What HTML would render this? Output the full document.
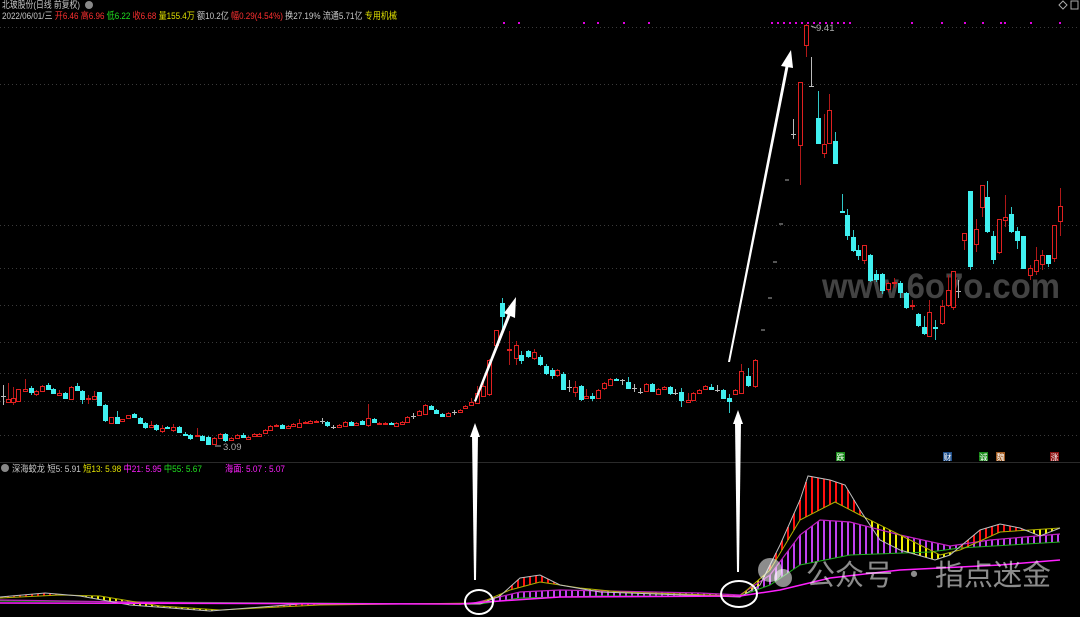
<!DOCTYPE html>
<html><head><meta charset="utf-8"><style>
html,body{margin:0;padding:0;background:#000;width:1080px;height:617px;overflow:hidden}
svg{position:absolute;left:0;top:0}
.t{font-family:"Liberation Sans","Noto Sans CJK SC",sans-serif;font-size:9.5px}
</style></head><body>
<svg id="s" width="1080" height="617" xmlns="http://www.w3.org/2000/svg">
<g id="grid" stroke="#3a3a3a" stroke-dasharray="1 3" stroke-width="1"></g>
<line x1="0" y1="462.5" x2="1080" y2="462.5" stroke="#2a2a2a"/>
<text x="822" y="298" font-family="Liberation Sans,sans-serif" font-size="35" font-weight="bold" fill="#5a5a5a" fill-opacity="0.75" textLength="238" lengthAdjust="spacingAndGlyphs">www.6o7o.com</text>
<g id="ind"></g>
<g id="cd"></g>
<g class="t">
<text x="2" y="8" fill="#c8c8c8" textLength="78" lengthAdjust="spacingAndGlyphs">北玻股份(日线 前复权)</text>
<circle cx="89" cy="5" r="4" fill="#888"/>
<text x="2" y="19" textLength="395" lengthAdjust="spacingAndGlyphs"><tspan fill="#c8c8c8">2022/06/01/三 </tspan><tspan fill="#ff3030">开6.46 高6.96 </tspan><tspan fill="#20e020">低6.22 </tspan><tspan fill="#ff3030">收6.68 </tspan><tspan fill="#e0e000">量155.4万 </tspan><tspan fill="#c8c8c8">额10.2亿 </tspan><tspan fill="#ff3030">幅0.29(4.54%) </tspan><tspan fill="#c8c8c8">换27.19% 流通5.71亿 </tspan><tspan fill="#e0e000">专用机械</tspan></text>
<circle cx="5" cy="468" r="4" fill="#888"/>
<text x="12" y="472" textLength="190" lengthAdjust="spacingAndGlyphs"><tspan fill="#c8c8c8">深海蛟龙 短5: 5.91 </tspan><tspan fill="#e0e000">短13: 5.98 </tspan><tspan fill="#ff20ff">中21: 5.95 </tspan><tspan fill="#20e020">中55: 5.67</tspan></text>
<text x="225" y="472" fill="#ff20ff" textLength="60" lengthAdjust="spacingAndGlyphs">海面: 5.07 : 5.07</text>
<text x="816" y="31" fill="#aaa">9.41</text>
<text x="223" y="450" fill="#aaa">3.09</text>
</g>
<g font-family="Liberation Sans,Noto Sans CJK SC,sans-serif" font-size="8" fill="#fff">
<rect x="836" y="452" width="9" height="9" fill="#1a8a1a"/><text x="836.5" y="460">跌</text>
<rect x="943" y="452" width="9" height="9" fill="#1e4e8a"/><text x="943.5" y="460">财</text>
<rect x="979" y="452" width="9" height="9" fill="#1a8a1a"/><text x="979.5" y="460">诚</text>
<rect x="996" y="452" width="9" height="9" fill="#a05a20"/><text x="996.5" y="460">魏</text>
<rect x="1050" y="452" width="9" height="9" fill="#8a1010"/><text x="1050.5" y="460">涨</text>
</g>
<path d="M1059 5 l4 -4 l4 4 l-4 4z" fill="none" stroke="#aaa"/>
<rect x="1071" y="1" width="7" height="8" fill="none" stroke="#aaa"/>
<g fill="#fff">
<polygon points="474,401 476,402 512,312 509,311"/><polygon points="504,313 516,297 515,318"/>
<polygon points="728,362 730,362 789,64 786,64"/><polygon points="781,66 791,50 793,68"/>
<polygon points="474,580 476,580 478,435 472,435"/><polygon points="470,437 475,423 480,437"/>
<polygon points="737,572 739,572 741,422 735,422"/><polygon points="733,424 738,410 743,424"/>
</g>
<ellipse cx="479" cy="602" rx="14" ry="12" fill="none" stroke="#fff" stroke-width="2"/>
<ellipse cx="739" cy="594" rx="18" ry="13" fill="none" stroke="#fff" stroke-width="2"/>
<g fill="#fff" fill-opacity="0.55">
<circle cx="770" cy="570" r="12"/><circle cx="783" cy="578" r="9"/>
<text x="806" y="585" font-family="Noto Sans CJK SC,sans-serif" font-size="29">公众号 · 指点迷金</text>
</g>
</svg>
<script>
var NS="http://www.w3.org/2000/svg",S=document.getElementById('s');
function el(p,t,a){var e=document.createElementNS(NS,t);for(var k in a)e.setAttribute(k,a[k]);p.appendChild(e);return e}
var G=document.getElementById('grid');
[27,84,225,268,305,342,373,401,435].forEach(function(y){el(G,'line',{x1:0,x2:1080,y1:y+.5,y2:y+.5})});
for(var x=771;x<850;x+=6)el(S,'rect',{x:x,y:22,width:2,height:2,fill:'#e000e0'});
[911,941,964,982,1000,1004,1030,1059].forEach(function(x){el(S,'rect',{x:x,y:22,width:2,height:2,fill:'#e000e0'})});
[[503,22],[518,22],[583,22],[597,22],[623,22],[648,22]].forEach(function(p){el(S,'rect',{x:p[0],y:p[1],width:2,height:2,fill:'#e000e0'})});
var C=[[3,396,398,'x',385,405],[8,399,402,'r',383,402],[13,398,402,'r',387,405],[18,389,401,'r',389,402],[25,389,391,'r',379,392],[31,388,392,'c',386,395],[36,391,394,'r',390,396],[42,386,391,'r',385,392],[48,385,389,'c',383,390],[53,389,393,'c',388,394],[59,393,395,'r',390,396],[65,393,398,'c',392,399],[71,387,399,'r',386,399],[77,386,390,'c',383,391],[82,391,399,'c',390,404],[88,398,399,'r',395,404],[94,396,399,'r',391,400],[99,392,405,'c',392,405],[105,405,420,'c',404,422],[111,417,423,'r',417,423],[117,417,423,'c',411,424],[122,419,421,'r',419,422],[128,415,418,'r',415,418],[134,414,417,'c',413,418],[140,418,423,'c',417,424],[145,423,427,'c',422,429],[151,425,427,'r',421,428],[156,425,429,'c',424,431],[162,428,431,'r',425,433],[167,427,428,'c',426,429],[173,427,430,'r',424,432],[179,427,432,'c',426,433],[185,434,435,'c',432,436],[190,435,438,'c',434,440],[197,435,436,'r',428,437],[202,436,440,'c',435,441],[208,437,444,'c',436,445],[214,438,444,'r',437,445],[220,434,438,'r',433,439],[225,434,440,'c',433,442],[231,438,440,'r',437,441],[237,435,438,'r',434,438],[243,435,437,'c',433,438],[248,437,439,'r',436,440],[254,434,436,'r',433,437],[259,434,436,'r',433,437],[265,430,433,'r',429,434],[270,426,430,'r',425,431],[276,425,426,'r',424,427],[282,425,428,'c',424,429],[288,426,428,'r',425,429],[293,424,426,'r',423,427],[299,423,427,'r',419,428],[305,422,423,'r',421,424],[310,421,423,'r',420,424],[316,421,422,'r',420,423],[322,421,421,'x',418,424],[327,422,425,'c',421,427],[333,427,427,'x',425,429],[339,425,427,'r',424,428],[345,422,426,'r',421,427],[351,422,425,'c',421,426],[356,423,425,'r',422,426],[362,421,424,'c',420,425],[368,418,425,'r',404,427],[374,419,422,'c',418,423],[379,423,424,'r',422,425],[385,423,424,'r',422,425],[391,423,424,'c',422,425],[396,423,426,'r',422,427],[402,422,424,'r',421,425],[407,417,422,'r',416,423],[413,416,416,'x',413,419],[419,411,415,'r',410,416],[425,405,414,'r',404,415],[431,406,409,'c',405,410],[436,410,413,'c',409,414],[442,414,416,'c',413,417],[448,413,416,'r',412,417],[454,412,413,'x',410,415],[460,410,412,'r',409,413],[465,406,408,'r',405,409],[471,402,405,'r',398,406],[477,393,403,'r',386,404],[483,386,396,'r',381,397],[489,360,394,'r',359,396],[496,330,345,'r',330,346],[502,303,316,'c',298,330],[509,349,350,'r',331,365],[516,345,358,'r',341,365],[521,355,360,'c',351,364],
[528,351,356,'c',350,358],[534,352,358,'r',349,360],[540,357,364,'c',355,366],
[546,366,373,'c',364,375],[552,370,375,'c',368,379],[557,370,375,'r',369,377],[563,374,389,'c',372,390],[569,387,387,'x',380,392],[575,387,392,'r',381,397],[581,386,399,'c',385,401],[586,396,398,'r',389,399],[592,396,398,'c',393,401],[598,390,398,'r',389,399],[604,383,388,'r',382,390],[610,379,385,'r',378,386],[616,379,380,'c',378,381],[622,380,380,'x',379,385],[628,382,388,'c',377,389],[634,388,388,'x',384,392],[640,392,392,'x',388,394],[646,384,391,'r',383,392],[652,384,391,'c',383,392],[658,389,394,'r',388,395],[664,387,389,'r',386,390],[670,387,393,'c',386,395],[675,393,393,'x',389,395],[681,392,400,'c',388,407],[688,400,402,'r',393,403],[693,393,400,'r',392,401],[699,390,393,'r',389,394],[705,386,389,'r',385,390],[711,387,389,'c',384,390],[717,390,390,'x',385,392],[723,390,398,'c',389,399],[729,398,401,'c',394,413],[735,390,394,'r',389,395],[741,371,393,'r',364,394],[748,376,385,'c',368,387],[755,360,386,'r',359,388],
[793,134,134,'x',119,139],[800,82,145,'r',82,185],[806,25,45,'r',24,57],[811,86,86,'x',57,87],[818,118,143,'c',91,143],[824,144,153,'r',114,158],[829,110,143,'r',94,143],[835,141,163,'c',132,163],[842,211,212,'c',194,212],[847,215,235,'c',209,240],[853,237,250,'c',230,252],[858,250,255,'c',245,260],[864,245,260,'r',245,264],[870,255,280,'c',254,282],[876,274,279,'c',270,282],[882,274,290,'c',273,294],[888,283,289,'r',282,292],[894,282,283,'r',278,288],[900,283,292,'c',281,298],[906,293,307,'c',292,309],[912,305,305,'r',300,310],[918,314,325,'c',313,327],[924,327,333,'c',316,335],[929,312,336,'r',300,337],[935,327,327,'c',320,340],[942,306,323,'r',300,325],[948,290,305,'r',275,307],[953,271,307,'r',271,310],[958,291,291,'x',280,298],[964,233,240,'r',233,250],[970,191,266,'c',191,270],[976,229,244,'r',219,252],[982,185,207,'r',185,217],[987,197,231,'c',181,233],[993,236,259,'c',231,264],[999,219,252,'r',219,254],[1005,217,220,'r',195,227],[1011,214,231,'c',207,233],[1017,231,240,'c',227,249],[1023,236,268,'c',236,269],[1030,268,275,'r',265,280],[1036,260,271,'r',247,275],[1042,255,264,'r',250,270],[1048,255,263,'c',255,267],[1054,225,258,'r',225,262],[1060,206,221,'r',188,236]];
var cd=document.getElementById('cd');
C.forEach(function(c){var x=c[0],t=c[1],b=c[2],k=c[3];
 var col=k=='r'?'#e02020':k=='c'?'#40f0f0':'#bbbbbb';
 var wc=k=='r'?'#b01818':k=='c'?'#30c8c8':'#bbbbbb';
 el(cd,'line',{x1:x+.5,x2:x+.5,y1:c[4],y2:c[5],stroke:wc,'stroke-width':1});
 if(k=='x'){el(cd,'line',{x1:x-2,x2:x+3,y1:t+.5,y2:t+.5,stroke:col});return}
 var h=Math.max(b-t,1);
 if(k=='r')el(cd,'rect',{x:x-1.5,y:t+.5,width:4,height:h,fill:'#000',stroke:col,'stroke-width':1});
 else el(cd,'rect',{x:x-2,y:t,width:5,height:h+1,fill:col});
});
[[787,180],[781,224],[775,262],[770,298],[763,330]].forEach(function(p){el(cd,'line',{x1:p[0]-2,x2:p[0]+2,y1:p[1],y2:p[1],stroke:'#aaa'})});
el(cd,'line',{x1:811,x2:816,y1:26,y2:28,stroke:'#aaa'});el(cd,'line',{x1:215,x2:221,y1:446,y2:446,stroke:'#aaa'});
function L(pts){return function(x){for(var i=1;i<pts.length;i++){if(x<=pts[i][0]){var a=pts[i-1],b=pts[i];return a[1]+(b[1]-a[1])*(x-a[0])/(b[0]-a[0])}}return pts[pts.length-1][1]}}
var W=[[0,597],[45,593],[80,596],[130,605],[210,611],[300,604],[480,604],[500,596],[520,578],[540,575],[560,585],[600,592],[740,597],[760,585],[780,545],[800,500],[808,476],[830,480],[845,485],[860,510],[880,540],[900,550],[935,560],[950,555],[980,530],[1000,524],[1020,528],[1040,536],[1060,528]];
var Y=[[0,598],[60,595],[100,596],[160,606],[220,610],[320,605],[480,603],[510,590],[540,582],[580,588],[620,592],[740,596],[770,570],[800,520],[835,502],[860,515],[900,535],[940,555],[960,550],[1000,532],[1030,530],[1060,528]];
var P=[[0,600],[200,603],[470,604],[520,592],[560,590],[700,593],[740,595],[770,575],[800,535],[820,520],[850,522],[900,535],[950,546],[990,540],[1060,534]];
var Gr=[[0,601],[300,603],[480,604],[520,598],[600,596],[740,596],[770,585],[800,565],[850,555],[930,552],[960,548],[1060,542]];
var M=[[0,603],[460,604],[500,601],[560,597],[740,596],[780,590],[830,578],[900,570],[1000,565],[1060,560]];
var fw=L(W),fy=L(Y),fp=L(P),fg=L(Gr),ind=document.getElementById('ind');
for(var x=2;x<=1060;x+=6){var p=fp(x),g=fg(x);
 if(Math.abs(g-p)>0.5)el(ind,'line',{x1:x,x2:x,y1:p,y2:g,stroke:p<g?'#c040f0':'#80d020','stroke-width':2});
 var w=fw(x),y=fy(x);
 if(Math.abs(w-y)>0.5)el(ind,'line',{x1:x,x2:x,y1:w,y2:y,stroke:w<y?'#ff1010':'#f0f000','stroke-width':2});}
function PL(pts,c,sw){el(ind,'polyline',{points:pts.map(function(p){return p.join(',')}).join(' '),fill:'none',stroke:c,'stroke-width':sw})}
PL(Gr,'#20b020',1);PL(P,'#c020c0',1.2);PL(Y,'#b0b000',1);PL(W,'#c0c0c0',1);PL(M,'#ff20ff',1.5);
</script>
</body></html>
